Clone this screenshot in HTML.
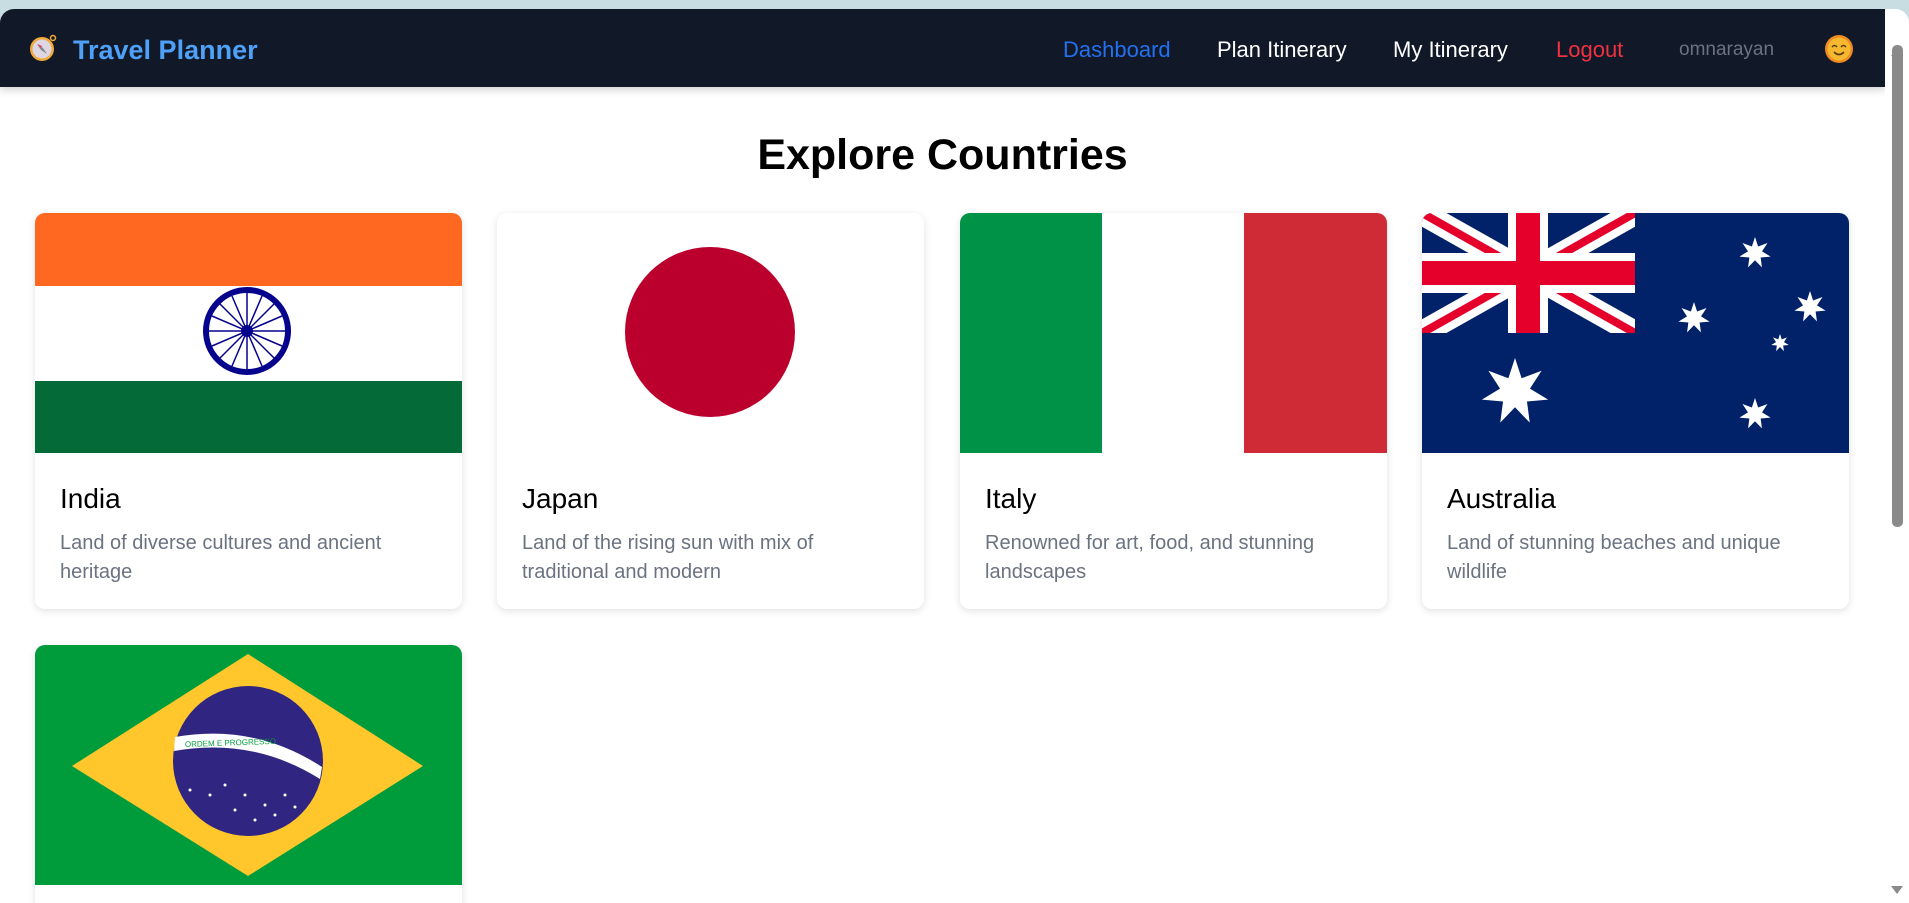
<!DOCTYPE html>
<html><head><meta charset="utf-8"><style>
*{margin:0;padding:0;box-sizing:border-box}
html,body{width:1909px;height:903px;overflow:hidden;background:#c7dde2;font-family:"Liberation Sans","DejaVu Sans",sans-serif}
#win{position:absolute;left:0;top:9px;width:1909px;height:894px;background:#fff;border-radius:14px 14px 0 0;overflow:hidden}
#nav{position:absolute;left:0;top:0;width:1885px;height:78px;background:#111827;box-shadow:0 3px 8px rgba(0,0,0,.18)}
#nav .t{position:absolute;top:0;line-height:82px;font-size:22px;color:#fff;white-space:nowrap}
h1{position:absolute;left:0;width:1885px;top:122px;text-align:center;font-size:43px;font-weight:bold;color:#000}
.card{position:absolute;width:427px;height:396px;background:#fff;border-radius:10px;box-shadow:0 2px 8px rgba(0,0,0,.12);overflow:hidden}
.card svg{display:block;width:427px;height:240px}
.card h3{position:absolute;left:25px;top:270px;font-size:28px;font-weight:normal;color:#000}
.card p{position:absolute;left:25px;top:316px;width:380px;font-size:20px;line-height:29px;color:#6b7280}
#sb{position:absolute;left:1885px;top:0;width:24px;height:894px;background:#fff}
</style></head><body>
<div id="win">
<div id="nav">
 <svg style="position:absolute;left:28px;top:24px" width="30" height="30" viewBox="0 0 30 30"><circle cx="14" cy="16" r="12" fill="#f2a93b"/><circle cx="14" cy="16" r="9.5" fill="#ddd6e3"/><circle cx="25" cy="5" r="2.5" fill="none" stroke="#f2a93b" stroke-width="1.5"/><path d="M9 11 L15 15 L19 21 L13 17Z" fill="#888"/><path d="M9 11 L14 13 L13 15Z" fill="#e8365d"/></svg>
 <div class="t" style="left:73px;font-size:27px;font-weight:bold;color:#4ea1f7">Travel Planner</div>
 <div class="t" style="left:1063px;color:#2370f0">Dashboard</div>
 <div class="t" style="left:1217px">Plan Itinerary</div>
 <div class="t" style="left:1393px">My Itinerary</div>
 <div class="t" style="left:1556px;color:#f0313f">Logout</div>
 <div class="t" style="left:1679px;font-size:19px;color:#6b7280">omnarayan</div>
 <svg style="position:absolute;left:1824px;top:25px" width="30" height="30" viewBox="0 0 30 30"><circle cx="15" cy="15" r="14" fill="#f08a24"/><circle cx="15" cy="15" r="11.5" fill="#f5b82e"/><path d="M8 13 q2.5-3 5 0 M17 13 q2.5-3 5 0" stroke="#5a3a10" stroke-width="1.6" fill="none"/><path d="M10 18 q5 5 10 0" stroke="#5a3a10" stroke-width="1.6" fill="none"/></svg>
</div>
<h1>Explore Countries</h1>

<svg width="0" height="0" style="position:absolute"><defs><polygon id="s7" points="0,-1 0.195,-0.405 0.782,-0.624 0.439,-0.1 0.975,0.223 0.352,0.281 0.434,0.901 0,0.45 -0.434,0.901 -0.352,0.281 -0.975,0.223 -0.439,-0.1 -0.782,-0.624 -0.195,-0.405" fill="#fff"/><clipPath id="cj"><rect width="213" height="120"/></clipPath></defs></svg>

<div class="card" style="left:35px;top:204px">
 <svg viewBox="0 0 427 240" preserveAspectRatio="none"><rect width="427" height="73" fill="#ff6820"/><rect y="73" width="427" height="95" fill="#fff"/><rect y="168" width="427" height="72" fill="#046a38"/><circle cx="212" cy="118" r="41" fill="none" stroke="#06038d" stroke-width="6"/><g stroke="#06038d" stroke-width="1.5"><path d="M212 80V156M174 118H250M185 91L239 145M239 91L185 145M197 83L227 153M227 83L197 153M177 103L247 133M177 133L247 103"/></g><circle cx="212" cy="118" r="6" fill="#06038d"/></svg>
 <h3>India</h3><p>Land of diverse cultures and ancient heritage</p>
</div>
<div class="card" style="left:497px;top:204px">
 <svg viewBox="0 0 427 240" preserveAspectRatio="none"><rect width="427" height="240" fill="#fff"/><circle cx="213" cy="119" r="85" fill="#bc002d"/></svg>
 <h3>Japan</h3><p>Land of the rising sun with mix of traditional and modern</p>
</div>
<div class="card" style="left:960px;top:204px">
 <svg viewBox="0 0 427 240" preserveAspectRatio="none"><rect width="142" height="240" fill="#009246"/><rect x="142" width="142" height="240" fill="#fff"/><rect x="284" width="143" height="240" fill="#ce2b37"/></svg>
 <h3>Italy</h3><p>Renowned for art, food, and stunning landscapes</p>
</div>
<div class="card" style="left:1422px;top:204px">
 <svg viewBox="0 0 427 240" preserveAspectRatio="none"><rect width="427" height="240" fill="#012169"/>
 <g clip-path="url(#cj)"><path d="M0 0L213 120M213 0L0 120" stroke="#fff" stroke-width="24"/><path d="M0 0L213 120M213 0L0 120" stroke="#e4002b" stroke-width="8"/><path d="M106 0V120M0 60H213" stroke="#fff" stroke-width="40"/><path d="M106 0V120M0 60H213" stroke="#e4002b" stroke-width="24"/></g>
 <use href="#s7" transform="translate(93,179) scale(34)"/><use href="#s7" transform="translate(333,40) scale(16)"/><use href="#s7" transform="translate(388,94) scale(16)"/><use href="#s7" transform="translate(272,105) scale(16)"/><use href="#s7" transform="translate(358,130) scale(9)"/><use href="#s7" transform="translate(333,201) scale(16)"/></svg>
 <h3>Australia</h3><p>Land of stunning beaches and unique wildlife</p>
</div>
<div class="card" style="left:35px;top:636px">
 <svg viewBox="0 0 427 240" preserveAspectRatio="none"><rect width="427" height="240" fill="#009c3b"/><polygon points="37,121 213,9 388,121 213,231" fill="#ffc72c"/><circle cx="213" cy="116" r="75" fill="#302681"/><path d="M140 92 Q220 78 287 122 L285 134 Q218 92 139 106Z" fill="#fff"/><text x="0" y="0" font-size="8" fill="#009c3b" font-family="Liberation Sans" transform="translate(150,102) rotate(-2)">ORDEM E PROGRESSO</text><g fill="#fff"><circle cx="190" cy="140" r="1.5"/><circle cx="210" cy="150" r="1.5"/><circle cx="230" cy="160" r="1.5"/><circle cx="250" cy="150" r="1.5"/><circle cx="175" cy="150" r="1.5"/><circle cx="200" cy="165" r="1.5"/><circle cx="240" cy="170" r="1.5"/><circle cx="260" cy="162" r="1.5"/><circle cx="220" cy="175" r="1.5"/><circle cx="155" cy="145" r="1.5"/></g></svg>
</div>

<div id="sb"><svg width="24" height="894"><path d="M6 47L12 39L18 47Z" fill="#8a8a8a"/><rect x="7" y="36" width="11" height="482" rx="5" fill="#8a8a8a"/><path d="M6 877L12 885L18 877Z" fill="#8a8a8a"/></svg></div>
</div>
</body></html>
